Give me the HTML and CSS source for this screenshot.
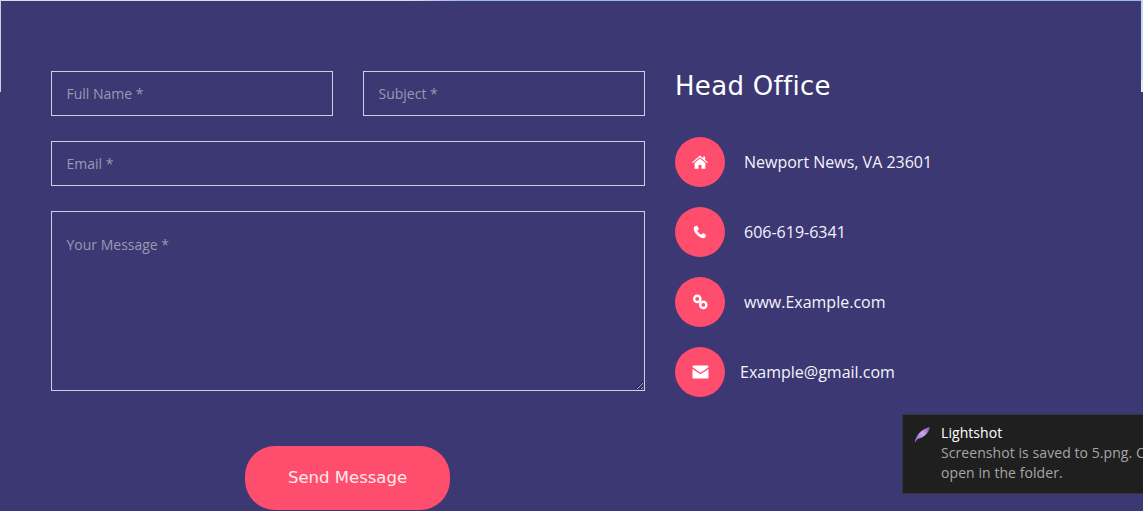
FILE: index.html
```html
<!DOCTYPE html>
<html lang="en">
<head>
<meta charset="utf-8">
<title>Contact</title>
<link rel="stylesheet" href="styles.css">
</head>
<body>
<div class="edge edge-top"></div>
<div class="edge edge-left"></div>
<div class="edge edge-right"></div>
<main class="contact">
  <form class="form">
    <div class="row">
      <input class="field" type="text" placeholder="Full Name *">
      <input class="field" type="text" placeholder="Subject *">
    </div>
    <input class="field" type="email" placeholder="Email *">
    <textarea class="field message" placeholder="Your Message *"></textarea>
    <button class="send" type="button">Send Message</button>
  </form>
  <section class="office">
    <h2 class="office-title">Head Office</h2>
    <ul class="office-list">
      <li class="office-item">
        <span class="badge"><svg class="icon" width="16" height="14" viewBox="0 0 16 14"><path d="M8 .6 11.2 3.3V1.6h1.9v3.3L15.8 7.2 15 8.1 8 2.3 1 8.1.2 7.2Z"/><path d="M8 3.5 13.4 8v5.2a.6.6 0 0 1-.6.6H9.5V9.9h-3v3.9H3.2a.6.6 0 0 1-.6-.6V8Z"/></svg></span>
        <span class="office-text">Newport News, VA 23601</span>
      </li>
      <li class="office-item">
        <span class="badge"><svg class="icon" width="14" height="14" viewBox="0 0 14 14"><path d="M3.4.7 1.6 1.5C.9 1.9.8 2.6.8 3.4c0 1.9 1 4 2.7 5.900 1.800 1.900 4 3.700 6.800 3.900.9 0 1.500-.2 2-.9l.8-1.700c.1-.3 0-.5-.2-.7L10.700 8.300c-.3-.2-.6-.2-.8 0L8.700 9.500c-.2.200-.5.200-.7.100C6.500 8.800 5.300 7.500 4.500 6c-.1-.2-.1-.5.100-.7l1.100-1.100c.2-.2.300-.5.100-.8L4.100 1c-.2-.3-.4-.4-.7-.3Z"/></svg></span>
        <span class="office-text">606-619-6341</span>
      </li>
      <li class="office-item">
        <span class="badge"><svg class="icon icon-link" width="17" height="16" viewBox="0 0 17 16"><circle cx="5.300" cy="4.900" r="3.100"/><circle cx="11.300" cy="10.900" r="3.100"/></svg></span>
        <span class="office-text">www.Example.com</span>
      </li>
      <li class="office-item office-item-mail">
        <span class="badge"><svg class="icon" width="17" height="14" viewBox="0 0 17 14"><path d="M1.600.5h13.800c.6 0 1.100.5 1.100 1.100 0 .5-.3.900-.7 1.200L9.300 7.300c-.5.300-1.100.3-1.600 0L1.200 2.800C.8 2.500.5 2.100.5 1.600.5 1 1 .5 1.600.5Z"/><path d="M.5 4 7.200 8.500c.8.500 1.800.5 2.600 0L16.500 4v8.400c0 .6-.5 1.100-1.100 1.100H1.600c-.6 0-1.100-.5-1.100-1.100Z"/></svg></span>
        <span class="office-text">Example@gmail.com</span>
      </li>
    </ul>
  </section>
</main>
<aside class="toast">
  <svg class="toast-icon" width="17" height="17" viewBox="0 0 17 17"><defs><linearGradient id="feather" x1="0" y1="1" x2="1" y2="0"><stop offset="0" stop-color="#7f5cd0"/><stop offset=".55" stop-color="#cda6ee"/><stop offset="1" stop-color="#7d4a9c"/></linearGradient></defs><path fill="url(#feather)" d="M.8 16C1.500 10.500 6.500 3.500 15.800.8 15.500 5 11.500 11 4.500 12.800 3.200 13.200 2.200 14.500 1.600 16Z"/></svg>
  <div class="toast-body">
    <div class="toast-title">Lightshot</div>
    <div class="toast-text">Screenshot is saved to 5.png. Click to<br>open in the folder.</div>
  </div>
</aside>
</body>
</html>
```
FILE: styles.css
```css
* { box-sizing: border-box; }
html, body { margin: 0; height: 100%; }
body {
  position: relative;
  width: 1143px;
  height: 511px;
  overflow: hidden;
  background: #3c3873;
  font-family: "Open Sans", sans-serif;
}
.edge { position: absolute; }
.edge-top {
  left: 0;
  top: 0;
  width: 100%;
  height: 1px;
  background: linear-gradient(to right, #d9dcea 0 410px, #9db8ec 460px 100%);
}
.edge-left { left: 0; top: 0; width: 1px; height: 92px; background: #c9cce2; }
.edge-right {
  right: 0;
  top: 0;
  width: 2px;
  height: 92px;
  background: linear-gradient(to bottom, #c3d9f7 0 80px, #e8e8ee 80px 100%);
}
.contact {
  display: flex;
  gap: 30px;
  padding: 71px 0 0 51px;
}
.form {
  width: 594px;
  display: flex;
  flex-direction: column;
  gap: 25px;
}
.row { display: flex; gap: 30px; }
.field {
  display: block;
  width: 100%;
  height: 45px;
  min-width: 0;
  padding: 0 14.5px;
  border: 1px solid #cfcde6;
  border-radius: 0;
  background: transparent;
  color: #fff;
  font: 14px/20px "Open Sans", sans-serif;
  outline: 0;
}
.field::placeholder { color: #9a99b2; opacity: 1; }
.message {
  height: 180px;
  padding: 23px 14.5px 10px;
  resize: vertical;
}
.send {
  align-self: flex-start;
  width: 205px;
  height: 64px;
  margin: 30px 0 0 194px;
  padding: 0;
  border: 0;
  border-radius: 30px;
  background: #ff4d6d;
  color: #ffe9ed;
  font: 16.5px/20px "DejaVu Sans", sans-serif;
}
.office { width: 440px; }
.office-title {
  margin: 0 0 36px;
  color: #fff;
  font: 400 26px/30px "DejaVu Sans", sans-serif;
  letter-spacing: .3px;
}
.office-list {
  list-style: none;
  margin: 0;
  padding: 0;
  display: flex;
  flex-direction: column;
  gap: 20px;
}
.office-item { display: flex; align-items: center; gap: 19px; }
.office-item-mail { gap: 15px; }
.badge {
  display: flex;
  align-items: center;
  justify-content: center;
  flex: none;
  width: 50px;
  height: 50px;
  border-radius: 50%;
  background: #ff4d6d;
}
.icon { display: block; fill: #fff; }
.icon-link { fill: none; stroke: #fff; stroke-width: 2.4; }
.office-text {
  color: #f4f3fb;
  font-size: 16px;
  font-weight: 500;
  line-height: 22px;
}
.toast {
  position: absolute;
  left: 903px;
  top: 415px;
  width: 240px;
  height: 78px;
  display: flex;
  gap: 10px;
  padding: 8px 0 0 11px;
  overflow: hidden;
  background: #1f1f1f;
  outline: 1px solid #35333f;
  white-space: nowrap;
}
.toast-icon { flex: none; margin-top: 3px; }
.toast-body { font-size: 14px; line-height: 20px; letter-spacing: .07px; }
.toast-title { color: #fff; }
.toast-text { color: #a6a6a6; }
```
